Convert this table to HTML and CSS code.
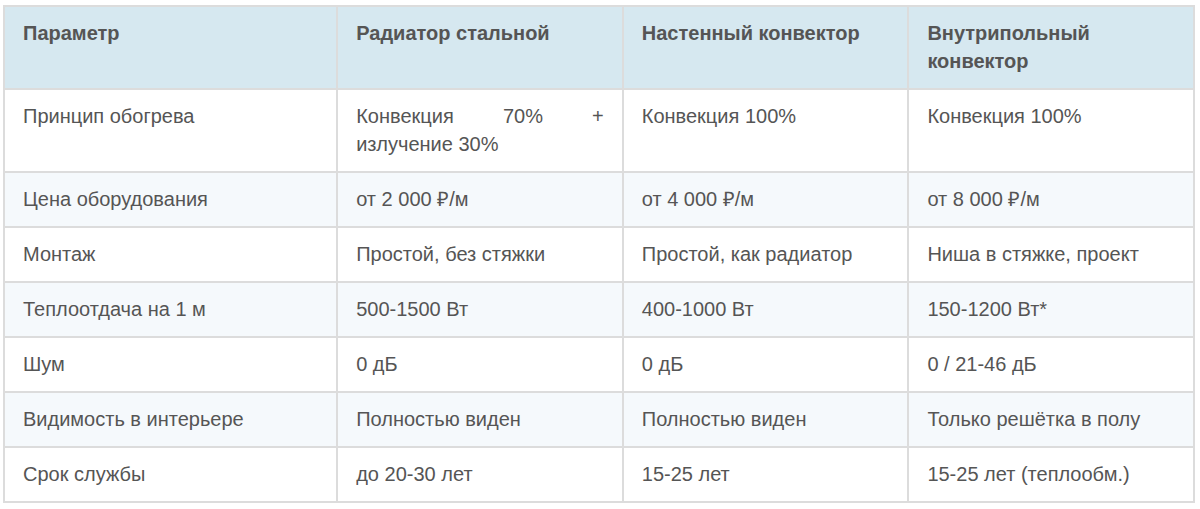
FILE: index.html
```html
<!DOCTYPE html>
<html lang="ru">
<head>
<meta charset="utf-8">
<link rel="stylesheet" href="styles.css">
</head>
<body>
<table class="cmp">
  <colgroup>
    <col class="c-first"><col class="c-rest"><col class="c-rest"><col class="c-rest">
  </colgroup>
  <thead>
    <tr><th>Параметр</th><th>Радиатор стальной</th><th>Настенный конвектор</th><th>Внутрипольный конвектор</th></tr>
  </thead>
  <tbody>
    <tr><td>Принцип обогрева</td><td>Конвекция 70% + излучение 30%</td><td>Конвекция 100%</td><td>Конвекция 100%</td></tr>
    <tr><td>Цена оборудования</td><td>от 2 000 ₽/м</td><td>от 4 000 ₽/м</td><td>от 8 000 ₽/м</td></tr>
    <tr><td>Монтаж</td><td>Простой, без стяжки</td><td>Простой, как радиатор</td><td>Ниша в стяжке, проект</td></tr>
    <tr><td>Теплоотдача на 1 м</td><td>500-1500 Вт</td><td>400-1000 Вт</td><td>150-1200 Вт*</td></tr>
    <tr><td>Шум</td><td>0 дБ</td><td>0 дБ</td><td>0 / 21-46 дБ</td></tr>
    <tr><td>Видимость в интерьере</td><td>Полностью виден</td><td>Полностью виден</td><td>Только решётка в полу</td></tr>
    <tr><td>Срок службы</td><td>до 20-30 лет</td><td>15-25 лет</td><td>15-25 лет (теплообм.)</td></tr>
  </tbody>
</table>
</body>
</html>
```
FILE: styles.css
```css
html, body {
  margin: 0;
  padding: 0;
  background: #ffffff;
}
body {
  padding: 5px 0 0 3px;
  font-family: "Liberation Sans", Arial, sans-serif;
  font-size: 20px;
  color: #555555;
}
.cmp {
  width: 1192px;
  border-collapse: collapse;
  table-layout: fixed;
}
.c-first { width: 28%; }
.c-rest { width: 24%; }
.cmp th, .cmp td {
  border: 2px solid #dcdcdc;
  padding: 12px 18px 13px 18px;
  line-height: 28px;
  text-align: justify;
  vertical-align: top;
}
.cmp th {
  background: #d6e8f0;
  font-weight: bold;
  color: #555555;
}
.cmp tbody tr:nth-child(even) td {
  background: #f5f9fc;
}
```
